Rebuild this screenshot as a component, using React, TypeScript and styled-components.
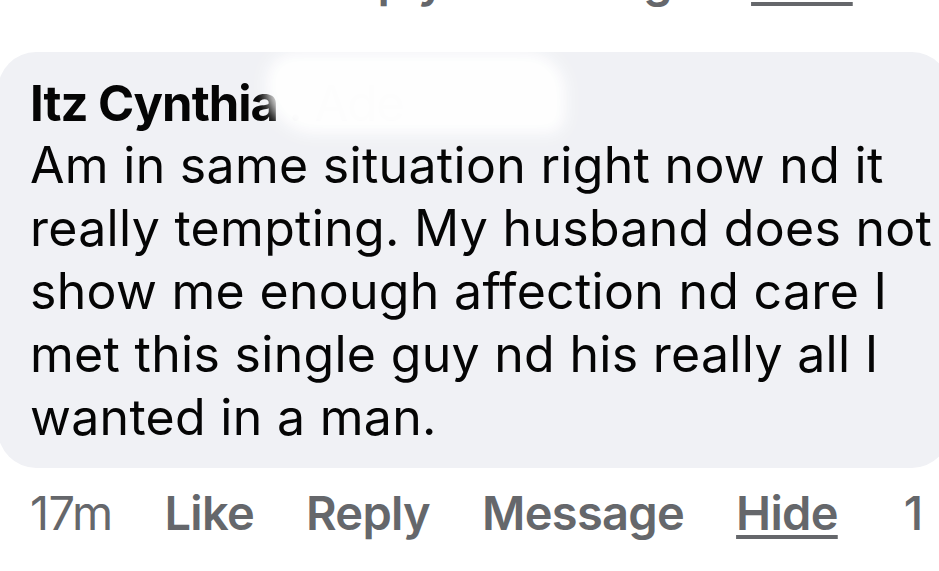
import React from 'react'
import styled, { createGlobalStyle } from 'styled-components'

const GlobalStyle = createGlobalStyle`
    html, body {
        margin: 0;
        padding: 0;
        background: #ffffff;
        overflow: hidden;
    }
    body {
        font-family: Inter, "Noto Sans", "Liberation Sans", sans-serif;
        -webkit-font-smoothing: antialiased;
    }
`;

type Comment = {
    author: string
    text: string
    time: string
    reactions: string
}

const comment: Comment = {
    author: 'Itz Cynthia',
    text: 'Am in same situation right now nd it really tempting. My husband does not show me enough affection nd care I met this single guy nd his really all I wanted in a man.',
    time: '17m',
    reactions: '1',
}

function Actions({ time, reactions }: { time: string; reactions: string }) {
    return (
        <>
            <Time>{time}</Time>
            <Action>Like</Action>
            <Action>Reply</Action>
            <Action>Message</Action>
            <Action $underline>Hide</Action>
            <Count>{reactions}</Count>
        </>
    )
}

function App() {
    return (
        <>
            <GlobalStyle />
            <Thread>
                <ActionRow $offset={-50}>
                    <Actions time="20m" reactions="1" />
                </ActionRow>
                <Bubble>
                    <Author>
                        {comment.author} <Hidden>. Ade</Hidden>
                    </Author>
                    <Body>{comment.text}</Body>
                    <Smudge />
                </Bubble>
                <ActionRow $offset={15}>
                    <Actions time={comment.time} reactions={comment.reactions} />
                </ActionRow>
            </Thread>
        </>
    )
}

export default App

const Thread = styled.div`
    display: flex;
    flex-direction: column;
    width: 939px;
    height: 571px;
    overflow: hidden;
`;

const Bubble = styled.div`
    position: relative;
    box-sizing: border-box;
    width: 952px;
    margin-top: 42px;
    margin-left: -2px;
    padding: 22px 12px 19px 32px;
    background: #f0f1f5;
    border-radius: 38px;
    color: #050505;
`;

const Author = styled.div`
    font-size: 49px;
    line-height: 60px;
    font-weight: 700;
    letter-spacing: -1px;
    white-space: nowrap;
`;

const Hidden = styled.span`
    color: #dcdce2;
    font-weight: 400;
`;

const Body = styled.div`
    font-size: 50px;
    line-height: 63px;
    font-weight: 400;
    letter-spacing: 0.3px;
`;

const Smudge = styled.div`
    position: absolute;
    left: 268px;
    top: 0;
    width: 300px;
    height: 82px;
    background: #ffffff;
    border-radius: 30px 40px 20px 50px;
    filter: blur(7px);
    opacity: 0.95;
`;

const ActionRow = styled.div<{ $offset: number }>`
    display: flex;
    align-items: baseline;
    gap: 52px;
    margin-top: ${p => p.$offset}px;
    padding-left: 30px;
    font-size: 47px;
    line-height: 60px;
    color: #65676b;
    white-space: nowrap;
    letter-spacing: -0.7px;
`;

const Time = styled.span`
    font-weight: 400;
`;

const Action = styled.span<{ $underline?: boolean }>`
    font-weight: 600;
    text-decoration: ${p => (p.$underline ? 'underline' : 'none')};
    text-decoration-thickness: 4px;
    text-underline-offset: 5px;
`;

const Count = styled.span`
    margin-left: 14px;
    font-weight: 500;
`;
